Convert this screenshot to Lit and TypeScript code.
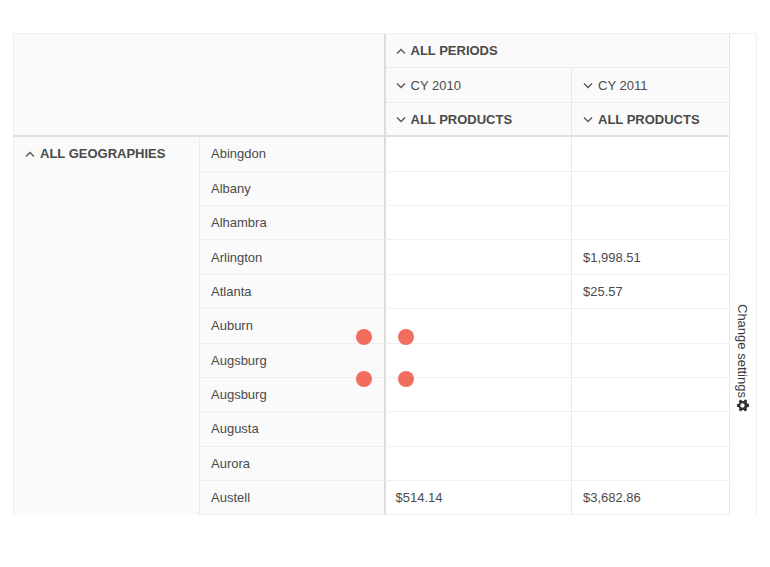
import { LitElement, html, css, svg } from "lit";
import { customElement } from "lit/decorators.js";

const rows: [string, string, string][] = [
  ["Abingdon", "", ""],
  ["Albany", "", ""],
  ["Alhambra", "", ""],
  ["Arlington", "", "$1,998.51"],
  ["Atlanta", "", "$25.57"],
  ["Auburn", "", ""],
  ["Augsburg", "", ""],
  ["Augsburg", "", ""],
  ["Augusta", "", ""],
  ["Aurora", "", ""],
  ["Austell", "$514.14", "$3,682.86"],
];

const chev = (up: boolean) =>
  html`<svg class="chev" viewBox="0 0 10 10" width="10" height="10">
    ${svg`<path d="${up ? "M1 7.5 L5 3.5 L9 7.5" : "M1 3.5 L5 7.5 L9 3.5"}" fill="none" stroke="#555" stroke-width="1.3"/>`}
  </svg>`;

@customElement("app-root")
export class AppRoot extends LitElement {
  static styles = css`
    :host {
      display: block;
      padding: 33px 13px 0;
      font-family: "Liberation Sans", Arial, sans-serif;
      font-size: 13px;
      color: #4a4a4a;
      height: 534px;
      box-sizing: content-box;
    }
    .wrap {
      position: relative;
      display: flex;
      width: 744px;
      height: 481.6px;
      overflow: hidden;
      border-top: 1px solid #f0f0f0;
      box-sizing: content-box;
    }
    .grid {
      display: grid;
      grid-template-columns: 187px 185.5px 186.5px 158px;
      grid-auto-rows: 34.4px;
      width: 717px;
      flex: none;
    }
    .cell {
      box-sizing: border-box;
      display: flex;
      align-items: center;
      gap: 5px;
      padding-left: 11px;
      white-space: nowrap;
      min-width: 0;
    }
    .c3 {
      padding-left: 10px;
    }
    .chev {
      flex: none;
    }
    .b {
      font-weight: 700;
    }
    .corner {
      grid-column: 1 / span 2;
      grid-row: 1 / span 3;
      background: #fafafa;
      border-left: 1px solid #f0f0f0;
      border-right: 2px solid #dcdcdc;
      border-bottom: 2px solid #e0e0e0;
    }
    .head {
      background: #fafafa;
      border-bottom: 1px solid #ececec;
      border-right: 1px solid #e6e6e6;
    }
    .span2 {
      grid-column: 3 / span 2;
    }
    .last {
      border-bottom: 2px solid #e0e0e0;
      padding-top: 1px;
    }
    .geo {
      grid-column: 1;
      grid-row: 4 / span 11;
      background: #fafafa;
      align-items: flex-start;
      padding-top: 9px;
      line-height: 16px;
      border-left: 1px solid #f0f0f0;
      border-right: 1px solid #ececec;
    }
    .geo .chev {
      margin-top: 3px;
    }
    .city {
      background: #fafafa;
      border-bottom: 1px solid #f0f0f0;
      border-right: 2px solid #dcdcdc;
    }
    .val {
      background: #fff;
      border-bottom: 1px solid #f0f0f0;
      border-right: 1px solid #e8e8e8;
    }
    .side {
      flex: 1;
      display: flex;
      justify-content: center;
      align-items: flex-start;
      padding: 270px 1px 0 0;
      border-right: 1px solid #f0f0f0;
      background: #fff;
    }
    .settings {
      writing-mode: vertical-rl;
      display: flex;
      align-items: center;
      color: #3a3a3a;
    }
    .gear {
      transform: rotate(90deg);
      flex: none;
    }
    .dots {
      position: absolute;
      left: 343px;
      top: 295px;
      display: grid;
      grid-template-columns: 16px 16px;
      grid-template-rows: 16px 16px;
      gap: 26px;
    }
    .dot {
      background: #f16d5e;
      border-radius: 50%;
    }
  `;

  render() {
    return html`
      <div class="wrap">
        <div class="grid">
          <div class="corner"></div>
          <div class="cell head span2 c3 b">${chev(true)}ALL PERIODS</div>
          <div class="cell head c3">${chev(false)}CY 2010</div>
          <div class="cell head">${chev(false)}CY 2011</div>
          <div class="cell head last c3 b">${chev(false)}ALL PRODUCTS</div>
          <div class="cell head last b">${chev(false)}ALL PRODUCTS</div>
          <div class="cell geo b">${chev(true)}ALL GEOGRAPHIES</div>
          ${rows.map(
            ([c, a, b]) => html`
              <div class="cell city">${c}</div>
              <div class="cell val c3">${a}</div>
              <div class="cell val">${b}</div>
            `
          )}
        </div>
        <div class="side">
          <div class="settings">
            Change settings
            <svg class="gear" viewBox="0 0 16 16" width="15" height="15">
              <path
                fill-rule="evenodd"
                fill="#333"
                d="M6.6 1h2.8l.4 2 1.2.7 1.9-.7 1.4 2.4-1.5 1.3v1.6l1.5 1.3-1.4 2.4-1.9-.7-1.2.7-.4 2H6.6l-.4-2-1.2-.7-1.9.7-1.4-2.4 1.5-1.3V6.7L1.2 5.4l1.4-2.4 1.9.7 1.2-.7zM8 5.7a2.3 2.3 0 1 0 0 4.6 2.3 2.3 0 0 0 0-4.6z"
              />
            </svg>
          </div>
        </div>
        <div class="dots">
          <div class="dot"></div>
          <div class="dot"></div>
          <div class="dot"></div>
          <div class="dot"></div>
        </div>
      </div>
    `;
  }
}
